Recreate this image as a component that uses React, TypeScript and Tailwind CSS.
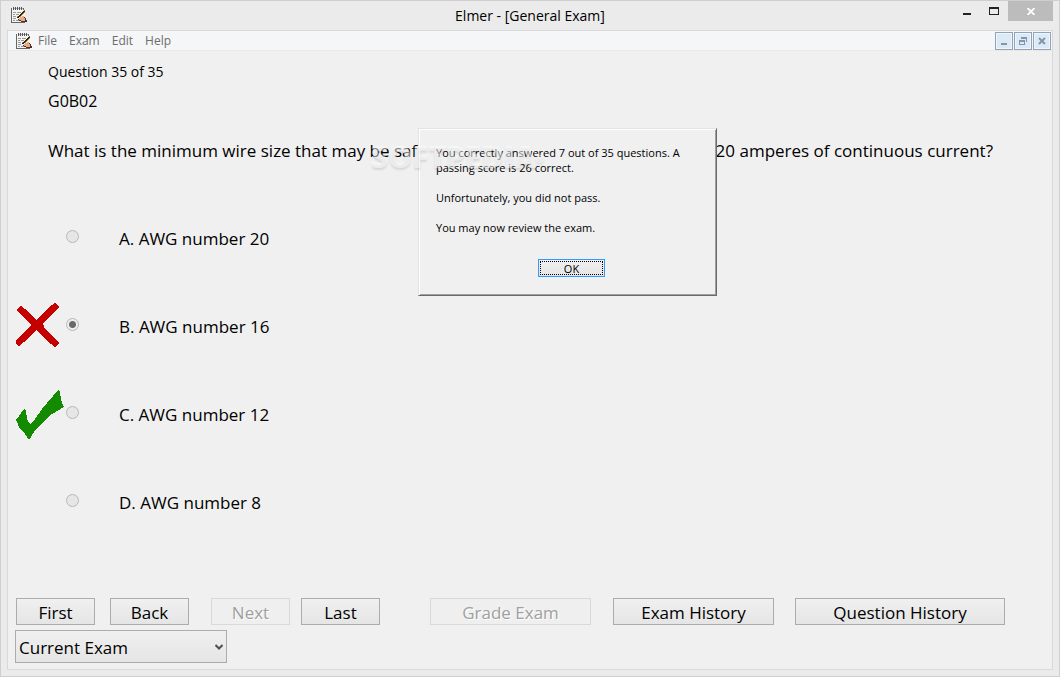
import { clsx } from 'clsx'

type Mark = 'wrong' | 'right'

interface Answer {
  id: string
  text: string
  mark?: Mark
}

const answers: Answer[] = [
  { id: 'A', text: 'AWG number 20' },
  { id: 'B', text: 'AWG number 16', mark: 'wrong' },
  { id: 'C', text: 'AWG number 12', mark: 'right' },
  { id: 'D', text: 'AWG number 8' },
]

const menus = ['File', 'Exam', 'Edit', 'Help']

function NotepadIcon() {
  return (
    <svg viewBox="0 0 16 16" className="size-4 shrink-0" shapeRendering="crispEdges" aria-hidden="true">
      <path d="M0 1h12l2 3v12H0z" fill="#f4f4f4" />
      <path d="M0 1h1v15H0zM1 15h13v1H1zM12 1h1v2h-1zM13 3h1v3h-1z" fill="#666" />
      <path d="M2 0h1v3H2zM4 0h1v3H4zM6 0h1v3H6zM8 0h1v3H8zM10 0h1v3h-1z" fill="#555" />
      <path d="M3 1h1v1H3zM5 1h1v1H5zM7 1h1v1H7zM9 1h1v1H9zM11 1h1v1h-1z" fill="#aaa" />
      <path d="M2 5h3v1H2zM6 5h4v1H6zM2 7h2v1H2zM5 7h3v1H5zM2 9h3v1H2zM6 9h1v1H6zM2 11h3v1H2zM2 13h2v1H2zM5 13h4v1H5z" fill="#999" />
      <path d="M12 4h2v1h-2zM11 5h2v1h-2zM10 6h2v1h-2zM9 7h2v1H9zM8 8h2v1H8zM7 9h2v1H7zM6 10h2v1H6z" fill="#33240f" />
      <path d="M13 5h1v1h-1zM12 6h1v1h-1zM11 7h1v1h-1zM10 8h1v1h-1zM9 9h1v1H9z" fill="#c9a227" />
      <path d="M9 10h5v4H9zM8 11h1v2H8zM11 9h2v1h-2z" fill="#e8ab85" />
      <path d="M7 12h1v1H7zM8 13h2v1H8zM10 14h4v1h-4zM14 11h1v4h-1zM15 13h1v2h-1zM13 10h1v1h-1z" fill="#4a3029" />
    </svg>
  )
}

function MarkIcon({ mark }: { mark: Mark }) {
  if (mark === 'wrong') {
    return (
      <svg viewBox="0 0 50 50" className="size-[50px]" shapeRendering="crispEdges" role="img" aria-label="Wrong answer">
        <path d="M5 11 39 44M39 8 3 43" stroke="#c40000" strokeWidth="7" strokeLinecap="round" fill="none" />
        <path d="M16 26 22 20 28 27 22 33Z" fill="#c40000" />
      </svg>
    )
  }
  return (
    <svg
      viewBox="0 0 50 50"
      className="size-[50px] overflow-visible"
      shapeRendering="crispEdges"
      role="img"
      aria-label="Correct answer"
    >
      <path
        d="M0 33 8 22 10 24 11 32 14 37 17 35 26 22 42 3 44 5 45 13 48 20 36 27 26 36 18 45 13 53 9 47 4 42Z"
        fill="#148a00"
      />
    </svg>
  )
}

function TitleBar() {
  return (
    <header className="flex h-[29px] shrink-0 items-start">
      <div className="w-[110px] pt-[6px] pl-1">
        <NotepadIcon />
      </div>
      <h1 className="flex-1 pt-1 text-center text-[14px] leading-[22px]">Elmer - [General Exam]</h1>
      <div className="flex w-[110px] justify-end">
        <button aria-label="Minimize" className="flex h-5 w-7 items-center justify-center">
          <svg viewBox="0 0 10 10" className="size-[10px]" shapeRendering="crispEdges">
            <path d="M2 7h8v2H2z" fill="#222" />
          </svg>
        </button>
        <button aria-label="Maximize" className="flex h-5 w-7 items-center justify-center">
          <svg viewBox="0 0 10 8" className="h-2 w-[10px]" shapeRendering="crispEdges">
            <path d="M0 0h10v8H0zM1 2v5h8V2z" fill="#222" fillRule="evenodd" />
          </svg>
        </button>
        <button aria-label="Close" className="flex h-5 w-[45px] items-center justify-center bg-[#bcbcbc]">
          <svg viewBox="0 0 8 7" className="h-[7px] w-2">
            <path d="M.5 0 7.5 7M7.5 0 .5 7" stroke="#fff" strokeWidth="1.8" />
          </svg>
        </button>
      </div>
    </header>
  )
}

const childButton =
  'flex h-[18px] w-[18px] items-center justify-center border border-[#93a3b5] bg-[#dceaf7] shadow-[inset_0_0_0_1px_#eef5fc]'

function MenuBar() {
  return (
    <nav className="flex h-5 shrink-0 items-center border-b border-[#e8e8e8] bg-[#f5f6f7] pt-px pr-px pl-2">
      <NotepadIcon />
      <div className="flex flex-1 gap-3 pl-[6px]">
        {menus.map((name) => (
          <button key={name} className="text-[12px] leading-4 text-[#6d6d6d]">
            {name}
          </button>
        ))}
      </div>
      <div className="flex gap-px">
        <button aria-label="Minimize exam" className={childButton}>
          <svg viewBox="0 0 10 10" className="size-[10px]" shapeRendering="crispEdges">
            <path d="M2 7h6v2H2z" fill="#8496a9" />
          </svg>
        </button>
        <button aria-label="Restore exam" className={childButton}>
          <svg viewBox="0 0 10 10" className="size-[10px]" shapeRendering="crispEdges">
            <path d="M3 1h6v5H8V3H3zM1 4h6v5H1zM2 6v2h4V6z" fill="#8496a9" fillRule="evenodd" />
          </svg>
        </button>
        <button aria-label="Close exam" className={childButton}>
          <svg viewBox="0 0 10 10" className="size-[10px]">
            <path d="M2 2 8 8M8 2 2 8" stroke="#8496a9" strokeWidth="2" />
          </svg>
        </button>
      </div>
    </nav>
  )
}

function AnswerRow({ answer, checked }: { answer: Answer; checked: boolean }) {
  return (
    <div className="flex h-[88px] items-center pl-2">
      <div className="w-[50px]">{answer.mark && <MarkIcon mark={answer.mark} />}</div>
      <input
        type="radio"
        name="answer"
        id={`answer-${answer.id}`}
        defaultChecked={checked}
        disabled
        className="size-[13px] appearance-none rounded-full border border-[#b8b8b8] bg-[#e6e6e6] checked:bg-[radial-gradient(circle,#6a6a6a_3px,#eeeeee_4px)]"
      />
      <label htmlFor={`answer-${answer.id}`} className="pt-[6px] pl-10 text-[17px] leading-6">
        {answer.id}. {answer.text}
      </label>
    </div>
  )
}

function PushButton({ label, className, disabled }: { label: string; className: string; disabled?: boolean }) {
  return (
    <button
      disabled={disabled}
      className={clsx(
        'h-[27px] border pt-[2px] text-[17px] leading-6',
        disabled
          ? 'border-[#d9d9d9] bg-[#efefef] text-[#a0a0a0] text-shadow-[1px_1px_0_#ffffff]'
          : 'border-[#acacac] bg-linear-to-b from-[#f0f0f0] to-[#e5e5e5]',
        className
      )}
    >
      {label}
    </button>
  )
}

function ResultDialog() {
  return (
    <div
      role="dialog"
      aria-label="Exam result"
      className="absolute top-[97px] left-[410px] flex h-[168px] w-[299px] flex-col border border-t-[#e3e3e3] border-r-[#696969] border-b-[#696969] border-l-[#e3e3e3] bg-[#f0f0f0] px-[17px] pt-4 text-[11px] leading-[15px] shadow-[inset_1px_1px_0_#ffffff,inset_-1px_-1px_0_#a0a0a0]"
    >
      <p>
        You correctly answered 7 out of 35 questions. A
        <br />
        passing score is 26 correct.
      </p>
      <p className="mt-[15px]">Unfortunately, you did not pass.</p>
      <p className="mt-[15px]">You may now review the exam.</p>
      <button className="mt-6 ml-[102px] h-[18px] w-[67px] border border-[#3399ff] bg-linear-to-b from-[#f0f0f0] to-[#e5e5e5] p-px">
        <span className="flex h-full items-center justify-center border border-dotted border-black">OK</span>
      </button>
    </div>
  )
}

export default function App() {
  return (
    <div className="flex min-h-screen flex-col border border-[#cfcfcf] bg-[#ebebeb] px-[6px] pb-[6px] font-['Open_Sans','Noto_Sans',sans-serif] text-black">
      <TitleBar />
      <main className="relative flex flex-1 flex-col border border-[#d9d9d9] bg-[#f0f0f0]">
        <MenuBar />
        <section className="pl-10">
          <p className="pt-[11px] text-[14px] leading-5">Question 35 of 35</p>
          <p className="mt-[7px] text-[16px] leading-6">G0B02</p>
          <h2 className="mt-6 text-[17px] leading-7 whitespace-nowrap">
            What is the minimum wire size that may be safely used for a circuit that draws up to 20 amperes of
            continuous current?
          </h2>
        </section>
        <fieldset className="mt-[27px]">
          {answers.map((answer) => (
            <AnswerRow key={answer.id} answer={answer} checked={answer.id === 'B'} />
          ))}
        </fieldset>
        <div className="mt-auto pb-[6px] pl-[7px]">
          <div className="flex pl-px">
            <PushButton label="First" className="w-[79px]" />
            <PushButton label="Back" className="ml-[15px] w-[79px]" />
            <PushButton label="Next" className="ml-[22px] w-[79px]" disabled />
            <PushButton label="Last" className="ml-[11px] w-[79px]" />
            <PushButton label="Grade Exam" className="ml-[50px] w-[161px]" disabled />
            <PushButton label="Exam History" className="ml-[22px] w-[161px]" />
            <PushButton label="Question History" className="ml-[21px] w-[210px]" />
          </div>
          <div className="relative mt-[5px] w-[212px]">
            <select
              aria-label="Exam to review"
              className="block h-[33px] w-full appearance-none border border-[#acacac] bg-linear-to-b from-[#f0f0f0] to-[#e5e5e5] pt-[2px] pl-[3px] text-[17px] leading-6"
            >
              <option>Current Exam</option>
            </select>
            <svg viewBox="0 0 8 6" className="pointer-events-none absolute top-[14px] right-1 h-[6px] w-2">
              <path d="M.5 1 4 4.500 7.500 1" fill="none" stroke="#505050" strokeWidth="2" />
            </svg>
          </div>
        </div>
        <ResultDialog />
        <div className="pointer-events-none absolute top-[106px] left-[363px] text-[30px] leading-10 font-extrabold text-white/50 text-shadow-[0_2px_2px_rgb(0_0_0/0.1)]">
          SOFTPEDIA<sup className="text-[10px]">®</sup>
        </div>
      </main>
    </div>
  )
}
